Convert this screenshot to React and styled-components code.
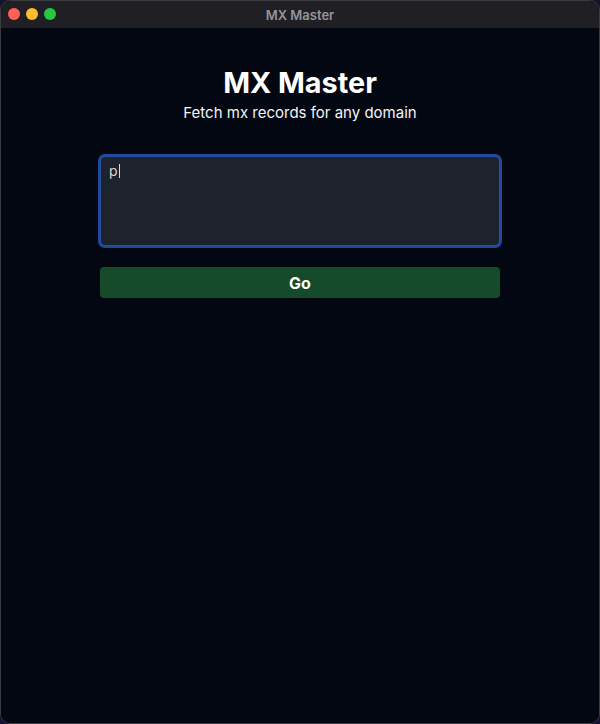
import React from "react";
import styled, { createGlobalStyle } from "styled-components";

const GlobalStyle = createGlobalStyle`
  html, body {
    margin: 0;
    padding: 0;
    background: #14112e;
  }
  body {
    font-family: Inter, "Noto Sans", sans-serif;
  }
`;

const Window = styled.div`
  width: 600px;
  height: 724px;
  box-sizing: border-box;
  display: flex;
  flex-direction: column;
  border: 1px solid #3b3a40;
  border-radius: 10px;
  overflow: hidden;
  background: #030712;
`;

const TitleBar = styled.div`
  height: 27px;
  flex-shrink: 0;
  position: relative;
  display: flex;
  align-items: center;
  justify-content: center;
  background: #201f24;
`;

const Lights = styled.div`
  position: absolute;
  left: 7px;
  top: 7px;
  display: flex;
  column-gap: 6px;
`;

const Light = styled.span`
  width: 12px;
  height: 12px;
  border-radius: 50%;
  background: ${(props) => props.color};
`;

const WindowTitle = styled.div`
  font-size: 13px;
  font-weight: 600;
  color: #96959b;
`;

const Content = styled.div`
  flex: 1;
  display: flex;
  flex-direction: column;
  align-items: center;
  padding-top: 37px;
  background: #030712;
`;

const Heading = styled.h1`
  margin: 0;
  font-size: 28.8px;
  line-height: 36px;
  font-weight: 700;
  color: #ffffff;
`;

const Subtitle = styled.p`
  margin: 0;
  font-size: 15px;
  line-height: 24px;
  color: #f3f4f6;
`;

const Form = styled.div`
  width: 400px;
  margin-top: 31px;
  display: flex;
  flex-direction: column;
  row-gap: 21px;
`;

const Field = styled.div`
  height: 90px;
  box-sizing: border-box;
  padding: 4px 8px;
  border: 1px solid #2452a8;
  border-radius: 5px;
  box-shadow: 0 0 0 2px #1f4a9c;
  background: #1e222d;
  font-size: 14px;
  line-height: 20px;
  color: #d6d8dd;
  display: flex;
  align-items: flex-start;
`;

const Caret = styled.span`
  width: 1px;
  height: 14px;
  margin: 3px 0 0 1px;
  background: #d6d8dd;
`;

const GoButton = styled.button`
  height: 31px;
  border: none;
  border-radius: 4px;
  background: #154a2b;
  color: #ffffff;
  font-family: Inter, "Noto Sans", sans-serif;
  font-size: 16px;
  font-weight: 700;
  cursor: pointer;
`;

export default function App() {
  return (
    <>
      <GlobalStyle />
      <Window>
        <TitleBar>
          <Lights>
            <Light color="#fe5f57" />
            <Light color="#febc2e" />
            <Light color="#28c840" />
          </Lights>
          <WindowTitle>MX Master</WindowTitle>
        </TitleBar>
        <Content>
          <Heading>MX Master</Heading>
          <Subtitle>Fetch mx records for any domain</Subtitle>
          <Form>
            <Field>
              p<Caret />
            </Field>
            <GoButton>Go</GoButton>
          </Form>
        </Content>
      </Window>
    </>
  );
}
